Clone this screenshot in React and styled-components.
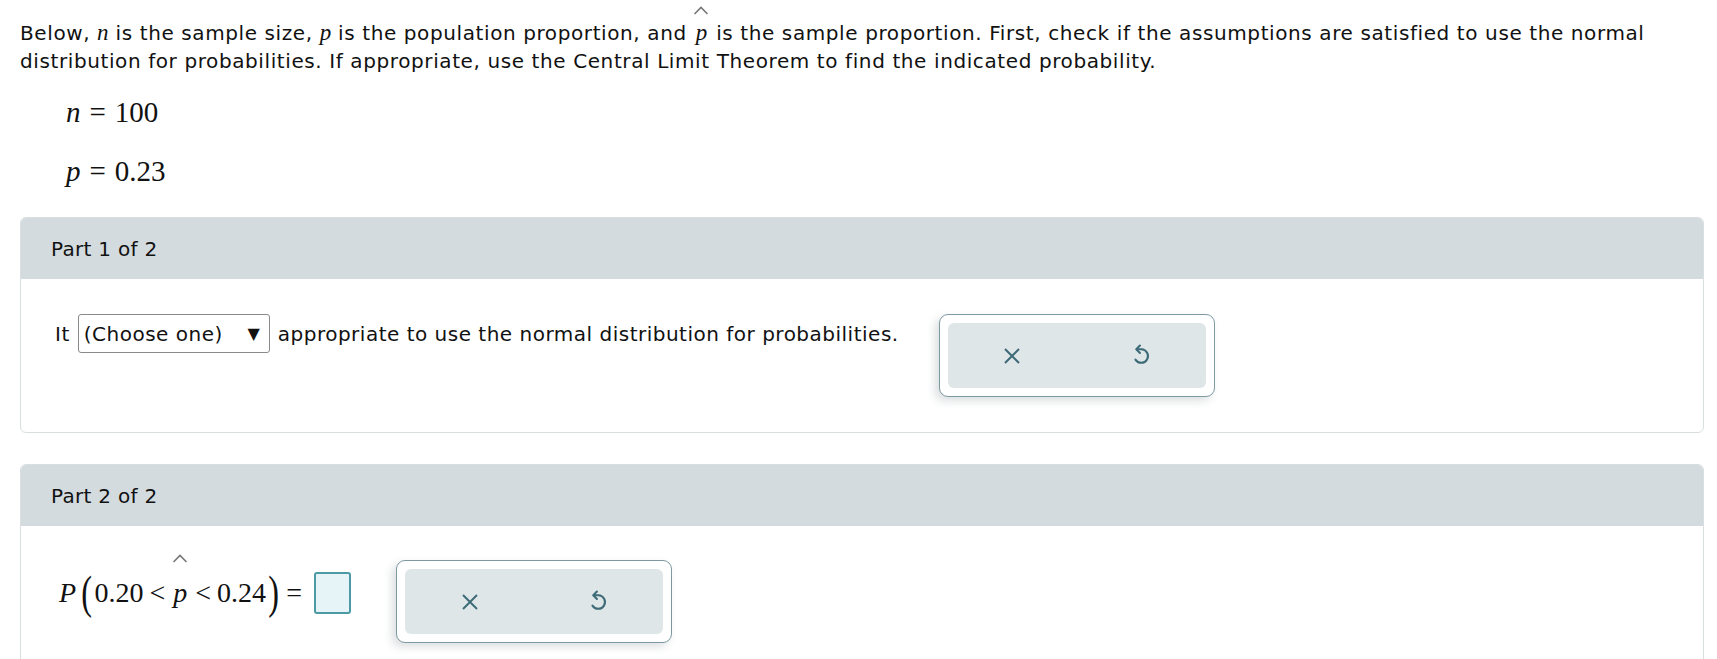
import React from "react";
import styled, { createGlobalStyle } from "styled-components";

const GlobalStyle = createGlobalStyle`
body {
  margin: 0;
  background: #fff;
  font-family: "DejaVu Sans", Verdana, sans-serif;
  color: #111;
}
`

const Page = styled.div`
padding: 19px 13px 0 20px;
`

const Intro = styled.p`
margin: 0;
font-size: 20px;
letter-spacing: 0.6px;
line-height: 28px;
`

const MathVar = styled.span`
font-family: "Liberation Serif", "Times New Roman", serif;
font-style: italic;
font-size: ${(p) => p.size || "23px"};
letter-spacing: 0;
`

const HatWrap = styled.span`
position: relative;
display: inline-block;
margin: 0 2px;
`

const Hat = styled.span`
position: absolute;
left: 50%;
top: ${(p) => p.top}px;
transform: translateX(-50%);
width: 15px;
height: 9px;
svg { display: block; }
`

const Given = styled.div`
margin: 22px 0 0 46px;
display: flex;
flex-direction: column;
gap: 29px;
font-family: "Liberation Serif", "Times New Roman", serif;
font-size: 29px;
line-height: 30px;
`

const Eq = styled.span`
margin: 0 9px;
`

const Panel = styled.section`
margin-top: ${(p) => p.top}px;
border: 1px solid #d9dfe1;
border-radius: 6px;
overflow: hidden;
`

const PanelHead = styled.div`
background: #d3dbde;
height: 61px;
padding-left: 30px;
display: flex;
align-items: center;
font-size: 20px;
letter-spacing: 0.3px;
`

const PanelBody = styled.div`
padding: ${(p) => p.pad};
display: flex;
align-items: flex-start;
`

const Sentence = styled.div`
display: flex;
align-items: center;
gap: 8px;
font-size: 20px;
letter-spacing: 0.5px;
`

const Select = styled.div`
display: flex;
align-items: center;
justify-content: space-between;
box-sizing: border-box;
width: 192px;
height: 39px;
padding: 0 9px 0 5px;
border: 1px solid #8a8a8a;
border-radius: 3px;
`

const Arrow = styled.span`
font-size: 16px;
letter-spacing: 0;
`

const ToolBox = styled.div`
margin-left: ${(p) => p.left}px;
padding: 8px;
border: 1px solid #7d99a2;
border-radius: 9px;
background: #fff;
box-shadow: -4px 4px 8px rgba(60, 80, 90, 0.18);
`

const ToolInner = styled.div`
width: 258px;
height: 65px;
display: flex;
background: #dfe6e8;
border-radius: 6px;
`

const ToolButton = styled.button`
flex: 1;
border: 0;
background: transparent;
display: flex;
align-items: center;
justify-content: center;
color: #3d6b78;
cursor: pointer;
padding: 0;
`

const Expr = styled.div`
display: flex;
align-items: center;
height: 42px;
margin-top: 12px;
font-family: "Liberation Serif", "Times New Roman", serif;
font-size: 28px;
`

const Paren = styled.span`
font-size: 46px;
line-height: 1;
margin: ${(p) => p.m};
transform: scaleX(0.7);
`

const Op = styled.span`
margin: 0 6px;
`

const AnswerBox = styled.span`
display: inline-block;
box-sizing: border-box;
width: 37px;
height: 42px;
margin-left: 12px;
border: 2px solid #4b9aa6;
border-radius: 3px;
background: #e6f4f8;
`

function HatSvg() {
  return (
    <svg width="15" height="9" viewBox="0 0 15 9">
      <path d="M1 8 L7.5 1.5 L14 8" fill="none" stroke="#777" strokeWidth="1.6" />
    </svg>
  )
}

function PHat({ top, size }) {
  return (
    <HatWrap>
      <MathVar size={size}>p</MathVar>
      <Hat top={top}><HatSvg /></Hat>
    </HatWrap>
  )
}

function XIcon() {
  return (
    <svg width="20" height="20" viewBox="0 0 20 20">
      <path d="M3 3 L17 17 M17 3 L3 17" stroke="currentColor" strokeWidth="2" fill="none" />
    </svg>
  )
}

function UndoIcon() {
  return (
    <svg width="21" height="23" viewBox="0 0 20 22">
      <path d="M8.5 1.5 L5 5 L8.5 8.5" stroke="currentColor" strokeWidth="2" fill="none" strokeLinecap="round" strokeLinejoin="round" />
      <path d="M5.5 5 H10 A6.5 6.5 0 1 1 4.2 15" stroke="currentColor" strokeWidth="2" fill="none" strokeLinecap="round" />
    </svg>
  )
}

function Tools({ left }) {
  return (
    <ToolBox left={left}>
      <ToolInner>
        <ToolButton aria-label="clear"><XIcon /></ToolButton>
        <ToolButton aria-label="undo"><UndoIcon /></ToolButton>
      </ToolInner>
    </ToolBox>
  )
}

export default function App() {
  return (
    <>
      <GlobalStyle />
      <Page>
        <Intro>
          Below, <MathVar>n</MathVar> is the sample size, <MathVar>p</MathVar> is the population proportion, and <PHat top={-13} /> is the sample proportion. First, check if the assumptions are satisfied to use the normal distribution for probabilities. If appropriate, use the Central Limit Theorem to find the indicated probability.
        </Intro>
        <Given>
          <div><i>n</i><Eq>=</Eq>100</div>
          <div><i>p</i><Eq>=</Eq>0.23</div>
        </Given>

        <Panel top={31}>
          <PanelHead>Part 1 of 2</PanelHead>
          <PanelBody pad="35px 30px 35px 34px">
            <Sentence>
              <span>It</span>
              <Select>
                <span>(Choose one)</span>
                <Arrow>▼</Arrow>
              </Select>
              <span>appropriate to use the normal distribution for probabilities.</span>
            </Sentence>
            <Tools left={40} />
          </PanelBody>
        </Panel>

        <Panel top={31}>
          <PanelHead>Part 2 of 2</PanelHead>
          <PanelBody pad="34px 30px 35px 38px">
            <Expr>
              <i>P</i>
              <Paren m="0 0 0 3px">(</Paren>
              <span>0.20</span>
              <Op>&lt;</Op>
              <PHat top={-23} size="28px" />
              <Op>&lt;</Op>
              <span>0.24</span>
              <Paren m="0 5px 0 0">)</Paren>
              <span>=</span>
              <AnswerBox />
            </Expr>
            <Tools left={45} />
          </PanelBody>
        </Panel>
      </Page>
    </>
  )
}
